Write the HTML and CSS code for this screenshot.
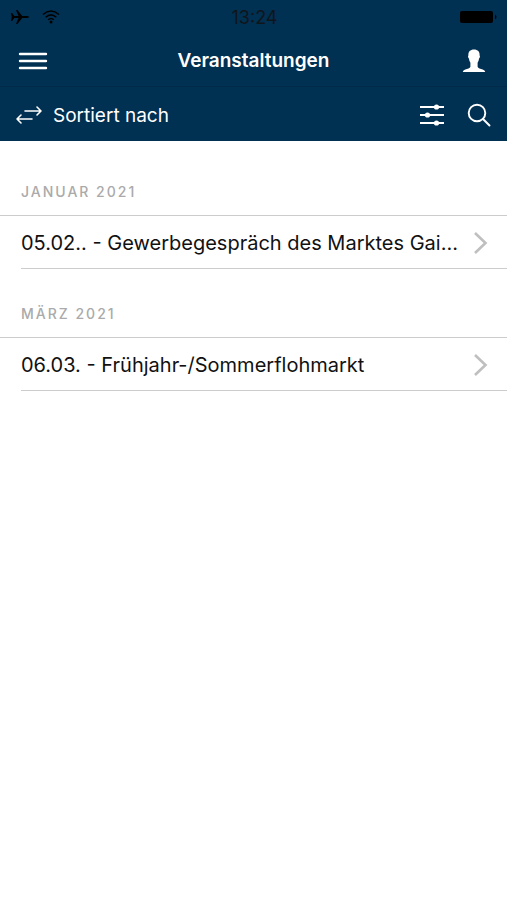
FILE: index.html
```html
<!DOCTYPE html>
<html lang="de">
<head>
	<title>Veranstaltungen</title>
	<meta charset="utf-8" />
	<meta name="viewport" content="width=device-width, initial-scale=1" />
	<link rel="stylesheet" href="styles.css">
</head>
<body>
	<header class="header">
		<div class="status">
			<div class="status-left">
				<svg width="20" height="16" viewBox="0 0 20 16"><path d="M1 4h1.200l2 3h4.300L6 1h1.400l4.800 6h4.800q2 .3 2.400 1-.4.700-2.400 1h-4.800l-4.800 6H6l2.500-6H4.200l-2 3H1l.8-4z"/></svg>
				<svg width="18" height="14" viewBox="0 0 18 14" fill="none" stroke="#000" stroke-width="1.500"><path d="M1 4.500q8-7 16 0M3.700 7.300q5.300-4.800 10.600 0M6.200 9.800q2.800-2.600 5.600 0"/><circle cx="9" cy="12" r="1.500" fill="#000" stroke="none"/></svg>
			</div>
			<span class="time">13:24</span>
			<svg class="battery" width="40" height="14" viewBox="0 0 40 14"><rect x="1" y="1" width="33" height="12" rx="2"/><path d="M36 4.500q3 2.500 0 5z"/></svg>
		</div>
		<div class="navbar">
			<button class="icon-btn" type="button" aria-label="Menü">
				<svg width="30" height="20" viewBox="0 0 30 20" stroke="#fff" stroke-width="2.400" stroke-linecap="round"><path d="M2 3h26M2 10h26M2 17h26"/></svg>
			</button>
			<h1 class="title">Veranstaltungen</h1>
			<button class="icon-btn user" type="button" aria-label="Profil">
				<svg width="30" height="24" viewBox="-3 0 30 24" fill="#fff"><path d="M12 .5c3.800 0 6 2.300 5.600 6 .6.600.4 2.200-.5 3-.3 1.800-.8 3.200-1.500 4.200v4c.4 1.500 3 2 5.100 2.700 1.500.5 2.300 1.200 2.500 2.600H.8c.2-1.400 1-2.100 2.500-2.600 2.100-.7 4.700-1.200 5.100-2.700v-4c-.7-1-1.200-2.400-1.500-4.200-.9-.8-1.100-2.400-.5-3C6 2.800 8.200.5 12 .5z"/></svg>
			</button>
		</div>
		<div class="toolbar">
			<button class="sort" type="button">
				<svg width="28" height="20" viewBox="0 0 28 20" fill="none" stroke="#fff" stroke-width="1.600" stroke-linecap="round" stroke-linejoin="round"><path d="M10 6h16M22 2l4 4-4 4M17 14H2M6 10l-4 4 4 4"/></svg>
				Sortiert nach
			</button>
			<button class="icon-btn" type="button" aria-label="Filter">
				<svg width="26" height="22" viewBox="0 0 26 22" fill="#fff" stroke="#fff" stroke-width="1.800"><path d="M1 3h24M1 11h24M1 19h24"/><g stroke="none"><circle cx="17.500" cy="3" r="2.600"/><circle cx="8.500" cy="11" r="2.600"/><circle cx="17.500" cy="19" r="2.600"/></g></svg>
			</button>
			<button class="icon-btn" type="button" aria-label="Suche">
				<svg width="24" height="24" viewBox="0 0 24 24" fill="none" stroke="#fff" stroke-width="1.900" stroke-linecap="round"><circle cx="10" cy="10" r="8.300"/><path d="M16 16l6.500 6.500"/></svg>
			</button>
		</div>
	</header>
	<main>
		<section>
			<h2 class="month">JANUAR 2021</h2>
			<a class="event" href="#">
				<span class="event-name">05.02.. - Gewerbegespräch des Marktes Gai...</span>
				<svg width="16" height="24" viewBox="0 0 16 24" fill="none" stroke="#bfbfbf" stroke-width="2.600"><path d="M2 2l10.500 10L2 22"/></svg>
			</a>
		</section>
		<section>
			<h2 class="month">MÄRZ 2021</h2>
			<a class="event" href="#">
				<span class="event-name">06.03. - Frühjahr-/Sommerflohmarkt</span>
				<svg width="16" height="24" viewBox="0 0 16 24" fill="none" stroke="#bfbfbf" stroke-width="2.600"><path d="M2 2l10.500 10L2 22"/></svg>
			</a>
		</section>
	</main>
</body>
</html>
```
FILE: styles.css
```css
body {margin: 0; background: #fff; color: #111; font-family: Inter, "Liberation Sans", sans-serif; font-size: 20px;}
svg {display: block; flex: none;}
button {padding: 0; border: 0; background: none; color: #fff; font: inherit; cursor: pointer;}

.header {background: #003052; color: #fff;}

.status {display: grid; grid-template-columns: 1fr auto 1fr; align-items: center; height: 34px; padding: 0 8px 0 10px; color: #000;}
.status-left {display: flex; align-items: center; gap: 12px;}
.time {font-size: 18px; color: #10151a;}
.battery {justify-self: end;}

.navbar {display: grid; grid-template-columns: 1fr auto 1fr; align-items: center; height: 50px; padding: 2px 18px 0; border-bottom: 1px solid #002a48;}
.title {margin: 0; font-size: 19px; font-weight: 600; line-height: 24px;}
.navbar .icon-btn {justify-self: start;}
.navbar .user {justify-self: end;}

.toolbar {display: flex; align-items: center; gap: 22px; height: 52px; padding: 2px 16px 0 15px;}
.sort {display: flex; align-items: center; gap: 10px; margin-right: auto; font-size: 19px;}

.month {margin: 0; padding: 41px 21px 13px; border-bottom: 1px solid #ccc; color: #aaa; font-size: 14px; font-weight: 500; line-height: 20px; letter-spacing: 2px;}
section + section .month {padding-top: 35px;}
.event {display: flex; align-items: center; gap: 10px; height: 50px; margin-left: 21px; padding: 2px 18px 0 0; border-bottom: 1px solid #ccc; color: #111; text-decoration: none;}
.event-name {flex: 1; overflow: hidden; white-space: nowrap; text-overflow: ellipsis;}
```
